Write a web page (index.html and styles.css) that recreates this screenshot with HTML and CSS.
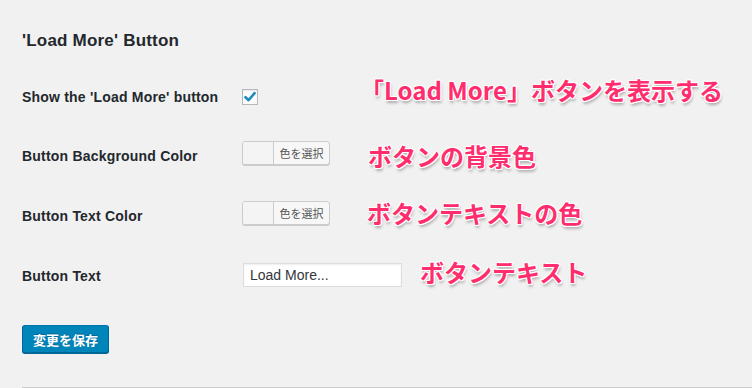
FILE: index.html
```html
<!DOCTYPE html>
<html lang="ja">
<head>
    <meta charset="UTF-8">
    <meta name="viewport" content="width=device-width, initial-scale=1.0">
    <title>Load More Button</title>
    <link rel="stylesheet" href="styles.css">
</head>
<body>
    <div class="wrap">
        <h2 class="section-title">'Load More' Button</h2>

        <div class="form">
            <div class="row row-check">
                <label class="row-label">Show the 'Load More' button</label>
                <div class="row-field">
                    <span class="checkbox">
                        <svg width="14" height="14" viewBox="0 0 14 14">
                            <path d="M2.5 7.2 L5.6 10.2 L11.6 3.2" fill="none" stroke="#1e8cbe" stroke-width="2.6" stroke-linecap="round" stroke-linejoin="round"/>
                        </svg>
                    </span>
                </div>
            </div>

            <div class="row row-color">
                <label class="row-label">Button Background Color</label>
                <div class="row-field">
                    <button class="color-btn"><span class="swatch"></span><span class="color-text">色を選択</span></button>
                </div>
            </div>

            <div class="row row-color row-last-color">
                <label class="row-label">Button Text Color</label>
                <div class="row-field">
                    <button class="color-btn"><span class="swatch"></span><span class="color-text">色を選択</span></button>
                </div>
            </div>

            <div class="row row-text">
                <label class="row-label">Button Text</label>
                <div class="row-field">
                    <input type="text" class="text-input" value="Load More...">
                </div>
            </div>
        </div>

        <button class="save-btn">変更を保存</button>

        <div class="section-end"></div>
    </div>

    <!-- 注釈 -->
    <div class="note note-show">「Load More」ボタンを表示する</div>
    <div class="note note-bg">ボタンの背景色</div>
    <div class="note note-color">ボタンテキストの色</div>
    <div class="note note-text">ボタンテキスト</div>
</body>
</html>
```

FILE: styles.css
```css
body {
    margin: 0;
    background-color: #f1f1f1;
    color: #23282d;
    font-family: "Liberation Sans", Arial, "Noto Sans CJK JP", sans-serif;
    font-size: 13px;
}

.wrap {
    padding-left: 22px;
    padding-top: 31px;
}

.section-title {
    margin: 0;
    font-size: 17px;
    line-height: 20px;
    font-weight: 600;
    letter-spacing: 0.2px;
}

.form {
    margin-top: 34px;
}

.row {
    display: flex;
    align-items: flex-start;
    height: 24px;
}

.row-label {
    width: 220px;
    font-size: 14px;
    line-height: 24px;
    font-weight: 600;
    letter-spacing: 0.2px;
}

.row-color {
    margin-top: 32px;
}

.row-color .row-label {
    padding-top: 3px;
}

.row-last-color {
    margin-top: 36px;
}

.row-text {
    margin-top: 38px;
}

.row-text .row-label {
    padding-top: 1px;
}

.row-field {
    height: 24px;
    display: flex;
    align-items: center;
}

.checkbox {
    width: 14px;
    height: 14px;
    border: 1px solid #b4b9be;
    background-color: #fff;
    box-shadow: inset 0 1px 2px rgba(0, 0, 0, 0.1);
    display: flex;
    align-items: center;
    justify-content: center;
}

.color-btn {
    display: flex;
    width: 88px;
    height: 24px;
    padding: 0;
    border: 1px solid #ccc;
    border-radius: 3px;
    background-color: #f7f7f7;
    box-shadow: 0 1px 0 #ccc;
    font-family: "Noto Sans CJK JP", sans-serif;
    cursor: pointer;
}

.swatch {
    width: 30px;
    height: 100%;
    border-right: 1px solid #ccc;
    background-color: #f4f4f4;
    border-radius: 2px 0 0 2px;
}

.color-text {
    flex: 1;
    font-size: 11px;
    line-height: 22px;
    color: #555;
    text-align: center;
}

.text-input {
    margin: 0 0 0 1px;
    width: 159px;
    height: 24px;
    box-sizing: border-box;
    padding: 0 6px;
    border: 1px solid #ddd;
    background-color: #fff;
    box-shadow: inset 0 1px 2px rgba(0, 0, 0, 0.07);
    color: #32373c;
    font-family: "Liberation Sans", Arial, sans-serif;
    font-size: 14px;
}

.save-btn {
    display: block;
    margin-top: 38px;
    width: 87px;
    height: 28px;
    padding: 0;
    border: 1px solid #0073aa;
    border-color: #0073aa #006799 #006799;
    border-radius: 3px;
    background-color: #0085ba;
    box-shadow: 0 1px 0 #006799;
    color: #fff;
    font-family: "Noto Sans CJK JP", sans-serif;
    font-size: 13px;
    font-weight: 700;
    text-shadow: 0 -1px 1px #006799;
    cursor: pointer;
}

.section-end {
    margin-top: 34px;
    border-top: 1px solid #ccc;
}

/* 注釈テキスト */
.note {
    position: absolute;
    font-family: "Noto Sans CJK JP", sans-serif;
    font-weight: 700;
    font-size: 24px;
    line-height: 24px;
    color: #ff2d6e;
    white-space: nowrap;
    text-shadow:
        1px 0 0 #fff, -1px 0 0 #fff, 0 1px 0 #fff, 0 -1px 0 #fff,
        1px 1px 0 #fff, -1px 1px 0 #fff, 1px -1px 0 #fff, -1px -1px 0 #fff,
        1px 3px 3px rgba(0, 0, 0, 0.3);
}

.note-show {
    left: 360px;
    top: 78px;
}

.note-bg {
    left: 368px;
    top: 144px;
}

.note-color {
    left: 367px;
    top: 201px;
}

.note-text {
    left: 420px;
    top: 260px;
}
```
